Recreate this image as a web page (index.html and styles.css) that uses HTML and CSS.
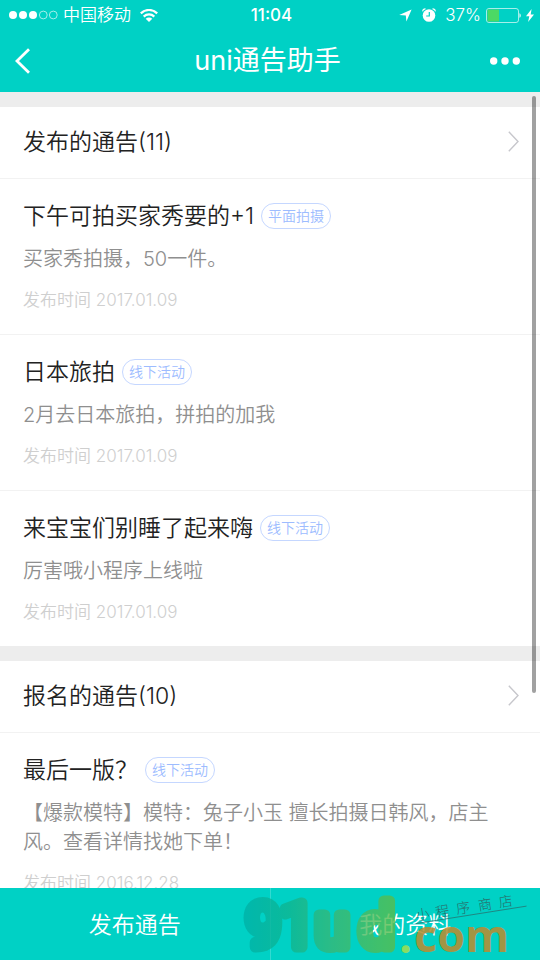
FILE: index.html
```html
<!DOCTYPE html>
<html lang="zh-CN">
<head>
<meta charset="utf-8">
<meta name="viewport" content="width=device-width, initial-scale=1">
<title>uni通告助手</title>
<link rel="stylesheet" href="styles.css">
</head>
<body>
<div class="app">
  <header class="top">
    <div class="status">
      <div class="status-left">
        <svg class="signal" width="49" height="10" viewBox="0 0 49 10" aria-hidden="true">
          <g fill="#fff"><circle cx="4" cy="5" r="4"/><circle cx="14" cy="5" r="4"/><circle cx="24" cy="5" r="4"/></g>
          <g fill="none" stroke="#fff" stroke-width="0.8" opacity=".8"><circle cx="34.3" cy="5" r="3.9"/><circle cx="44.3" cy="5" r="3.9"/></g>
        </svg>
        <span class="carrier">中国移动</span>
        <svg width="18" height="13" viewBox="0 0 18 13" aria-hidden="true">
          <g fill="none" stroke="#fff" stroke-width="2.2"><path d="M.8 4.4C5.4-.2 12.6-.2 17.2 4.4"/><path d="M3.7 7.6c3-2.9 7.6-2.9 10.6 0"/></g>
          <path d="M5.7 9.7c1.8-1.6 4.8-1.6 6.6 0L9 13z" fill="#fff"/>
        </svg>
      </div>
      <time class="clock">11:04</time>
      <div class="status-right">
        <svg width="13" height="13" viewBox="0 0 13 13" aria-hidden="true"><path d="M12.6.4 7.4 12.4 6.8 6.5.2 6.1z" fill="#fff"/></svg>
        <svg class="alarm" width="14" height="14" viewBox="0 0 14 14" aria-hidden="true">
          <circle cx="7" cy="7.5" r="6.3" fill="#fff"/>
          <path d="M.8 3.4C.7 1.8 1.8.8 3.5.9M13.2 3.4c.1-1.6-1-2.6-2.7-2.5" fill="none" stroke="#fff" stroke-width="1.2"/>
          <path d="M7.3 4v4H4.2" fill="none" stroke="#00d1c5" stroke-width="1.2"/>
        </svg>
        <span>37%</span>
        <svg width="35" height="15" viewBox="0 0 35 15" aria-hidden="true">
          <rect x=".5" y=".5" width="32" height="14" rx="2.5" fill="none" stroke="#fff" opacity=".65"/>
          <path d="M33.5 5.2c1.6.6 1.6 4 0 4.6z" fill="#fff"/>
          <path d="M1.5 1.5H13v12H1.5z" fill="#4cd964"/>
        </svg>
        <svg width="8" height="13" viewBox="0 0 8 13" aria-hidden="true"><path d="M5.6 0 0 7.3h3.3L2.1 13 8 5.4H4.7z" fill="#fff"/></svg>
      </div>
    </div>
    <nav class="bar">
      <button class="icon-btn back" type="button" aria-label="返回">
        <svg width="16" height="26" viewBox="0 0 16 26"><path d="M14 1.3 2 13l12 11.7" fill="none" stroke="#fff" stroke-width="2.8"/></svg>
      </button>
      <h1>uni通告助手</h1>
      <button class="icon-btn more" type="button" aria-label="更多">
        <svg width="30" height="8" viewBox="0 0 30 8" fill="#fff"><circle cx="3.7" cy="4" r="3.7"/><circle cx="15" cy="4" r="3.7"/><circle cx="26.3" cy="4" r="3.7"/></svg>
      </button>
    </nav>
  </header>

  <main class="content">
    <section class="group">
      <a class="group-head" href="#published">
        <h2>发布的通告(11)</h2>
        <svg width="11" height="21" viewBox="0 0 11 21"><path d="M.8.8 10 10.5.8 20.2" fill="none" stroke="#c7c7cc" stroke-width="1.4"/></svg>
      </a>
      <article class="item">
        <div class="item-title"><h3>下午可拍买家秀要的+1</h3><span class="tag">平面拍摄</span></div>
        <p class="desc">买家秀拍摄，50一件。</p>
        <p class="date">发布时间 2017.01.09</p>
      </article>
      <article class="item">
        <div class="item-title"><h3>日本旅拍</h3><span class="tag">线下活动</span></div>
        <p class="desc">2月去日本旅拍，拼拍的加我</p>
        <p class="date">发布时间 2017.01.09</p>
      </article>
      <article class="item">
        <div class="item-title"><h3>来宝宝们别睡了起来嗨</h3><span class="tag">线下活动</span></div>
        <p class="desc">厉害哦小程序上线啦</p>
        <p class="date">发布时间 2017.01.09</p>
      </article>
    </section>
    <section class="group">
      <a class="group-head" href="#applied">
        <h2>报名的通告(10)</h2>
        <svg width="11" height="21" viewBox="0 0 11 21"><path d="M.8.8 10 10.5.8 20.2" fill="none" stroke="#c7c7cc" stroke-width="1.4"/></svg>
      </a>
      <article class="item">
        <div class="item-title"><h3>最后一版？</h3><span class="tag">线下活动</span></div>
        <p class="desc">【爆款模特】模特：兔子小玉 擅长拍摄日韩风，店主风。查看详情找她下单！</p>
        <p class="date">发布时间 2016.12.28</p>
      </article>
    </section>
    <div class="scrollbar"></div>
  </main>

  <footer class="tabs">
    <button type="button">发布通告</button>
    <button type="button">我的资料</button>
    <svg class="mark" width="300" height="72" viewBox="0 0 300 72" aria-hidden="true">
      <defs>
        <linearGradient id="fade" gradientUnits="userSpaceOnUse" x1="3" y1="0" x2="153" y2="0">
          <stop offset="0" stop-color="#00b2a8"/><stop offset=".3" stop-color="#0fb591"/><stop offset=".6" stop-color="#38b876"/><stop offset="1" stop-color="#58bd4c"/>
        </linearGradient>
      </defs>
      <g class="mark-big" fill="url(#fade)" stroke="url(#fade)">
        <text x="6" y="59">9</text><text x="40" y="59">1</text><text x="75" y="59">u</text><text x="119" y="59">d</text>
      </g>
      <text class="mark-dot" x="159" y="65">.</text>
      <text class="mark-com" x="174" y="64">com</text>
      <g class="mark-note" transform="rotate(-9 180 36)">
        <text x="177" y="32">小</text><text x="197" y="32">程</text><text x="218" y="32">序</text><text x="240" y="32">商</text><text x="261" y="32">店</text>
        <path d="M176 35 288 35" fill="none" stroke="#286e6b" stroke-width=".7"/>
      </g>
    </svg>
  </footer>
</div>
</body>
</html>
```
FILE: styles.css
```css
* { box-sizing: border-box; }

body {
  margin: 0;
  background: #fff;
  color: #222;
  font-family: Inter, "Noto Sans CJK SC", sans-serif;
  font-weight: 350;
}

h1, h2, h3, p { margin: 0; font-weight: inherit; }

button {
  border: 0;
  padding: 0;
  background: none;
  color: inherit;
  font: inherit;
}

svg { display: block; flex: none; }

.app {
  display: flex;
  flex-direction: column;
  height: 100vh;
}

.top {
  flex: none;
  background: #00d1c5;
  color: #fff;
}

.status {
  display: grid;
  grid-template-columns: 1fr auto 1fr;
  align-items: center;
  height: 30px;
  padding: 0 6px 0 9px;
  font-size: 17px;
  line-height: 24px;
}

.status-left, .status-right { display: flex; align-items: center; }
.status-left { gap: 9px; }
.signal { margin-right: -4px; }
.clock { font-weight: 500; }
.status-right { justify-content: flex-end; gap: 5px; }
.alarm { margin: 0 4px 0 5px; }

.bar {
  display: grid;
  grid-template-columns: 1fr auto 1fr;
  align-items: center;
  height: 62px;
  padding: 0 20px 0 15px;
}

.bar h1 { font-size: 27px; line-height: 38px; font-weight: 400; }
.back { justify-self: start; }
.more { justify-self: end; }

.content {
  position: relative;
  flex: 1;
  min-height: 0;
  overflow: hidden;
}

.group { border-top: 15px solid #ededed; }

.group-head {
  display: flex;
  align-items: center;
  justify-content: space-between;
  height: 72px;
  padding: 0 21px 2px 23px;
  border-bottom: 1px solid #f2f2f2;
  color: inherit;
  text-decoration: none;
}

.group-head h2, .item h3 { font-size: 23px; line-height: 34px; }

.item {
  padding: 20px 23px 22px;
  border-bottom: 1px solid #f2f2f2;
}

.item:last-child { border-bottom: 0; }
.item-title { display: flex; align-items: center; gap: 7px; }

.tag {
  padding: 0 6px;
  border: 1px solid #c5d7ff;
  border-radius: 13px;
  color: #9dbcff;
  font-size: 14px;
  line-height: 24px;
}

.desc {
  margin-top: 12px;
  color: #8f8f8f;
  font-size: 20px;
  line-height: 29px;
}

.date {
  margin-top: 14px;
  color: #cfcfcf;
  font-size: 17px;
  line-height: 24px;
}

.scrollbar {
  position: absolute;
  top: 4px;
  right: 4px;
  width: 4px;
  height: 75%;
  border-radius: 2px;
  background: rgba(0, 0, 0, .37);
}

.tabs {
  position: relative;
  display: flex;
  flex: none;
  height: 72px;
  background: #00d1c5;
  color: #fff;
  font-size: 23px;
}

.tabs button { flex: 1; padding-bottom: 3px; }
.tabs button + button { border-left: 1px solid #33dad1; }

.mark {
  position: absolute;
  right: 0;
  bottom: 0;
  pointer-events: none;
}

.mark-big {
  font: 400 62px Roboto, sans-serif;
  stroke-width: 11px;
  stroke-linejoin: round;
  opacity: .8;
}

.mark-dot { font: 700 46px "Open Sans", sans-serif; fill: #8bdc60; }
.mark-com { font: 700 45px "Open Sans", sans-serif; fill: #b88d33; opacity: .88; }
.mark-note { font: 300 14px "Noto Sans CJK SC", sans-serif; fill: #286e6b; }
```
